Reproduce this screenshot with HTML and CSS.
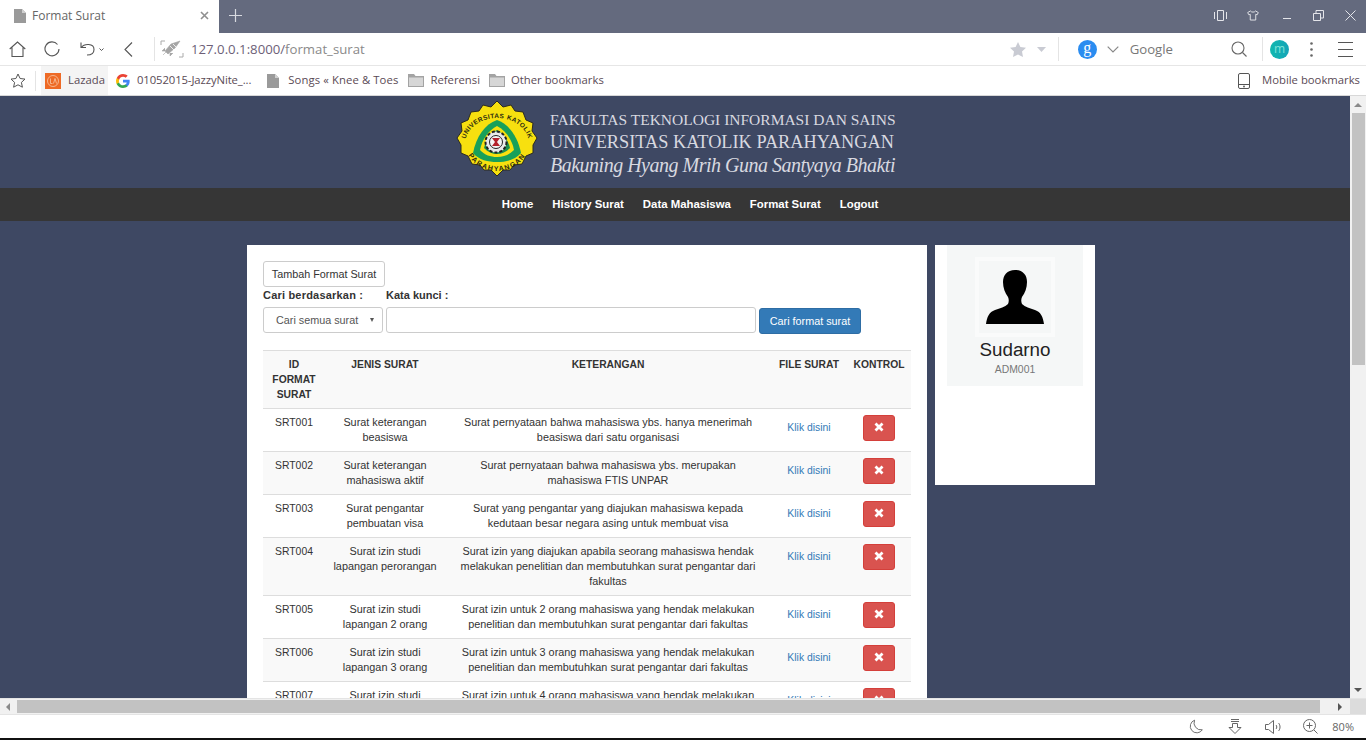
FILE: index.html
```html
<!DOCTYPE html>
<html>
<head>
<meta charset="utf-8">
<title>Format Surat</title>
<link rel="stylesheet" href="styles.css">
</head>
<body>

<!-- tab strip -->
<div class="titlebar">
  <div class="tab">
    <svg class="tab-doc" width="12" height="14" viewBox="0 0 12 14"><path d="M0 0h8l4 4v10H0z" fill="#9a9a9a"/><path d="M8 0l4 4H8z" fill="#d0d0d0"/></svg>
    <span class="tab-title">Format Surat</span>
    <svg class="tab-close" width="9" height="9" viewBox="0 0 9 9"><path d="M1 1l7 7M8 1L1 8" stroke="#8f8f8f" stroke-width="1.6"/></svg>
  </div>
  <svg class="tab-new" width="15" height="15" viewBox="0 0 15 15"><path d="M7.5 1v13M1 7.5h13" stroke="#d8dae0" stroke-width="1.2"/></svg>
  <div class="win-btns">
    <svg width="13" height="11" viewBox="0 0 13 11"><path d="M3.5 .5h6v10h-6zM.5 2v7M12.5 2v7" fill="none" stroke="#e4e5ea"/></svg>
    <svg class="ic-shirt" width="12" height="11" viewBox="0 0 14 12"><path d="M4 .7L.8 2.6l1.4 2.6 1.6-.6v6.7h6.4V4.6l1.6.6 1.4-2.6L10 .7C9 2.5 5 2.5 4 .7z" fill="none" stroke="#e4e5ea" stroke-width="1.1"/></svg>
    <svg width="10" height="11" viewBox="0 0 10 11"><path d="M1 8.500h8" stroke="#e4e5ea"/></svg>
    <svg width="11" height="11" viewBox="0 0 11 11"><path d="M.5 3.500h7v7h-7zM3 3.500V.5h7.500V8H7.500" fill="none" stroke="#e4e5ea"/></svg>
    <svg width="11" height="11" viewBox="0 0 11 11"><path d="M.5.5l10 10M10.500.5l-10 10" stroke="#e4e5ea"/></svg>
  </div>
</div>

<!-- address bar -->
<div class="toolbar">
  <svg class="ic-home" width="17" height="16" viewBox="0 0 17 16"><path d="M.7 8L8.500 1l7.800 7M3 6.500v9h11v-9" fill="none" stroke="#555" stroke-width="1.1"/></svg>
  <svg class="ic-reload" width="16" height="16" viewBox="0 0 16 16"><path d="M13.500 3.500A7 7 0 1 0 15 8" fill="none" stroke="#555" stroke-width="1.1"/></svg>
  <svg class="ic-undo" width="25" height="14" viewBox="0 0 25 14"><path d="M1 .5v5h5M1.500 5.500C4 1.500 14 1 14 7.500c0 3.500-3 5.500-7 5.500" fill="none" stroke="#555" stroke-width="1.1"/><path d="M19.500 6.500l2 2 2-2" fill="none" stroke="#555"/></svg>
  <svg class="ic-back" width="9" height="15" viewBox="0 0 9 15"><path d="M8 .5l-7 7 7 7" fill="none" stroke="#555" stroke-width="1.1"/></svg>
  <span class="tb-sep sep-a"></span>
  <svg class="ic-rocket" width="24" height="18" viewBox="0 0 24 18"><path d="M1 5V1h4M23 13v4h-4" fill="none" stroke="#aaa"/><path d="M20 1l-9 3-6 7 3 3 7-6zM5 8l-3 3 3 0M10 13l0 3 3-3M3 15l3-3" fill="#a5a5a5" stroke="#a5a5a5" stroke-width=".6"/><path d="M10 6l4 4M13 4l3 3" stroke="#fff" stroke-width=".8"/></svg>
  <span class="url"><b>127.0.0.1:8000/</b>format_surat</span>
  <svg class="ic-star" width="16" height="15" viewBox="0 0 16 15"><path d="M8 0l2.400 5 5.600.7-4 3.900 1 5.400L8 12.400 3 15l1-5.400-4-3.900L5.600 5z" fill="#c9cbd3"/></svg>
  <svg class="ic-caret" width="9" height="5" viewBox="0 0 9 5"><path d="M0 0h9L4.500 5z" fill="#c9cbd3"/></svg>
  <span class="tb-sep sep-b"></span>
  <span class="g-circle">g</span>
  <svg class="ic-chev" width="12" height="7" viewBox="0 0 12 7"><path d="M.7.7L6 6 11.300.7" fill="none" stroke="#888" stroke-width="1.200"/></svg>
  <span class="search-name">Google</span>
  <svg class="ic-search" width="16" height="16" viewBox="0 0 16 16"><circle cx="7" cy="7" r="6" fill="none" stroke="#666" stroke-width="1.100"/><path d="M11.500 11.500l4 4" stroke="#666" stroke-width="1.100"/></svg>
  <span class="tb-sep sep-c"></span>
  <span class="m-circle">m</span>
  <svg class="ic-dots" width="3" height="15" viewBox="0 0 3 15"><circle cx="1.500" cy="1.500" r="1.300" fill="#666"/><circle cx="1.500" cy="7.500" r="1.300" fill="#666"/><circle cx="1.500" cy="13.500" r="1.300" fill="#666"/></svg>
  <svg class="ic-menu" width="15" height="15" viewBox="0 0 15 15"><path d="M0 .5h15M0 7.500h15M0 14.500h15" stroke="#555"/></svg>
</div>

<!-- bookmarks -->
<div class="bookmarks">
  <svg class="ic-bmstar" width="16" height="15" viewBox="0 0 16 15"><path d="M8 1l2.100 4.500 4.900.6-3.600 3.300 1 4.800L8 11.800l-4.400 2.400 1-4.800L1 6.100l4.900-.6z" fill="none" stroke="#555"/></svg>
  <span class="bm-sep"></span>
  <span class="bm bm-lazada">
    <svg width="16" height="16" viewBox="0 0 16 16"><rect width="16" height="16" fill="#ee6a25"/><circle cx="8" cy="8" r="5.500" fill="none" stroke="#f8c9a8" stroke-width=".8"/><path d="M5.500 5.500v5h2M8.500 10.500l1.500-5 1.500 5" fill="none" stroke="#f8c9a8" stroke-width=".8"/></svg>
    Lazada
  </span>
  <span class="bm bm-g">
    <svg width="14" height="14" viewBox="0 0 18 18"><path d="M17.600 9.200c0-.6-.1-1.200-.2-1.800H9v3.500h4.800c-.2 1.100-.8 2.100-1.800 2.700v2.200h2.900c1.700-1.600 2.700-3.900 2.700-6.600z" fill="#4285f4"/><path d="M9 18c2.400 0 4.500-.8 6-2.200l-3-2.200c-.8.500-1.800.9-3 .9-2.300 0-4.300-1.600-5-3.700H1v2.300C2.500 16 5.500 18 9 18z" fill="#34a853"/><path d="M4 10.700c-.4-1.100-.4-2.300 0-3.400V5H1a9 9 0 0 0 0 8z" fill="#fbbc05"/><path d="M9 3.600c1.300 0 2.500.5 3.400 1.300L15 2.400C13.500.9 11.400 0 9 0 5.500 0 2.500 2 1 5l3 2.300C4.700 5.200 6.700 3.600 9 3.600z" fill="#ea4335"/></svg>
    01052015-JazzyNite_...
  </span>
  <span class="bm bm-songs">
    <svg width="12" height="14" viewBox="0 0 12 14"><path d="M0 0h8l4 4v10H0z" fill="#9a9a9a"/><path d="M8 0l4 4H8z" fill="#d0d0d0"/></svg>
    Songs « Knee &amp; Toes
  </span>
  <span class="bm bm-ref">
    <svg width="16" height="13" viewBox="0 0 16 13"><path d="M0 0h6l1.500 2H16v11H0z" fill="#a3a3a3"/><path d="M1 3.500h14V12H1z" fill="#d6d6d6"/></svg>
    Referensi
  </span>
  <span class="bm bm-other">
    <svg width="16" height="13" viewBox="0 0 16 13"><path d="M0 0h6l1.500 2H16v11H0z" fill="#a3a3a3"/><path d="M1 3.500h14V12H1z" fill="#d6d6d6"/></svg>
    Other bookmarks
  </span>
  <span class="bm bm-mobile">
    <svg width="12" height="16" viewBox="0 0 12 16"><rect x=".5" y=".5" width="11" height="15" rx="1.500" fill="none" stroke="#555"/><path d="M.5 11.500h11" stroke="#555"/><circle cx="6" cy="13.500" r=".9" fill="#555"/></svg>
    Mobile bookmarks
  </span>
</div>

<!-- browser viewport -->
<div class="viewport">
  <div class="page">
    <div class="site-header">
      <svg class="logo" width="90" height="84" viewBox="0 0 90 84">
        <defs>
          <path id="arcTop" d="M13 46 A32 26 0 0 1 77 46"/>
          <path id="arcBot" d="M12 42 A33 31 0 0 0 78 42"/>
        </defs>
        <path d="M45 3L51 9 59 7 63 13 71 14 74 22 81 25 80 33 85 40 81 47 81 55 74 58 70 66 62 67 58 72 51 72 45 78 39 72 32 72 28 67 20 66 16 58 9 55 9 47 5 40 10 33 9 25 16 22 19 14 27 13 31 7 39 9z" fill="#f7e00f" stroke="#2b2a20" stroke-width="1"/>
        <path d="M45 22c12 4 21 17 24 33-6 7-15 9-24 9s-18-2-24-9c3-16 12-29 24-33z" fill="#18a05a"/>
        <path d="M45 28c8 4 15 13 17 24-5 5-10 7-17 7s-12-2-17-7c2-11 9-20 17-24z" fill="#f7e00f"/>
        <path d="M45 32c6 3 11 10 13 18-4 4-8 6-13 6s-9-2-13-6c2-8 7-15 13-18z" fill="#1c8f50"/>
        <circle cx="44" cy="44" r="10.500" fill="#e9e9e9" stroke="#222" stroke-width="2" stroke-dasharray="3 2"/>
        <circle cx="44" cy="44" r="6.500" fill="#f4f4f4" stroke="#222"/>
        <path d="M40 40h8l-3 4 3 4h-8l3-4z" fill="#b3202a"/>
        <text class="logo-arc"><textPath href="#arcTop" startOffset="50%" text-anchor="middle">UNIVERSITAS KATOLIK</textPath></text>
        <text class="logo-arc logo-arc-b"><textPath href="#arcBot" startOffset="50%" text-anchor="middle">PARAHYANGAN</textPath></text>
      </svg>
      <div class="brand">
        <div class="brand-a">FAKULTAS TEKNOLOGI INFORMASI DAN SAINS</div>
        <div class="brand-b">UNIVERSITAS KATOLIK PARAHYANGAN</div>
        <div class="brand-c">Bakuning Hyang Mrih Guna Santyaya Bhakti</div>
      </div>
    </div>

    <div class="site-nav">
      <a>Home</a>
      <a>History Surat</a>
      <a>Data Mahasiswa</a>
      <a>Format Surat</a>
      <a>Logout</a>
    </div>

    <div class="content">
      <div class="card-main">
        <button class="btn btn-add">Tambah Format Surat</button>
        <div class="labels">
          <label class="lab-a">Cari berdasarkan :</label>
          <label>Kata kunci :</label>
        </div>
        <div class="search-row">
          <div class="fake-select">Cari semua surat<span class="sel-arrow"></span></div>
          <div class="fake-input"></div>
          <button class="btn btn-blue">Cari format surat</button>
        </div>

        <table class="tbl">
          <thead>
            <tr>
              <th class="col-id">ID FORMAT SURAT</th>
              <th class="col-jenis">JENIS SURAT</th>
              <th class="col-ket">KETERANGAN</th>
              <th class="col-file">FILE SURAT</th>
              <th class="col-ctl">KONTROL</th>
            </tr>
          </thead>
          <tbody id="rows">
            <tr>
              <td class="cell-id">SRT001</td><td>Surat keterangan beasiswa</td>
              <td>Surat pernyataan bahwa mahasiswa ybs. hanya menerimah beasiswa dari satu organisasi</td>
              <td><a class="file-link">Klik disini</a></td>
              <td><button class="btn-del"><svg width="10" height="10" viewBox="0 0 10 10"><path d="M1.500 1.500l7 7M8.500 1.500l-7 7" stroke="#fff" stroke-width="2.800"/></svg></button></td>
            </tr>
            <tr>
              <td class="cell-id">SRT002</td><td>Surat keterangan mahasiswa aktif</td>
              <td>Surat pernyataan bahwa mahasiswa ybs. merupakan mahasiswa FTIS UNPAR</td>
              <td><a class="file-link">Klik disini</a></td>
              <td><button class="btn-del"><svg width="10" height="10" viewBox="0 0 10 10"><path d="M1.500 1.500l7 7M8.500 1.500l-7 7" stroke="#fff" stroke-width="2.800"/></svg></button></td>
            </tr>
            <tr>
              <td class="cell-id">SRT003</td><td>Surat pengantar pembuatan visa</td>
              <td>Surat yang pengantar yang diajukan mahasiswa kepada kedutaan besar negara asing untuk membuat visa</td>
              <td><a class="file-link">Klik disini</a></td>
              <td><button class="btn-del"><svg width="10" height="10" viewBox="0 0 10 10"><path d="M1.500 1.500l7 7M8.500 1.500l-7 7" stroke="#fff" stroke-width="2.800"/></svg></button></td>
            </tr>
            <tr>
              <td class="cell-id">SRT004</td><td>Surat izin studi lapangan perorangan</td>
              <td>Surat izin yang diajukan apabila seorang mahasiswa hendak melakukan penelitian dan membutuhkan surat pengantar dari fakultas</td>
              <td><a class="file-link">Klik disini</a></td>
              <td><button class="btn-del"><svg width="10" height="10" viewBox="0 0 10 10"><path d="M1.500 1.500l7 7M8.500 1.500l-7 7" stroke="#fff" stroke-width="2.800"/></svg></button></td>
            </tr>
            <tr>
              <td class="cell-id">SRT005</td><td>Surat izin studi lapangan 2 orang</td>
              <td>Surat izin untuk 2 orang mahasiswa yang hendak melakukan penelitian dan membutuhkan surat pengantar dari fakultas</td>
              <td><a class="file-link">Klik disini</a></td>
              <td><button class="btn-del"><svg width="10" height="10" viewBox="0 0 10 10"><path d="M1.500 1.500l7 7M8.500 1.500l-7 7" stroke="#fff" stroke-width="2.800"/></svg></button></td>
            </tr>
            <tr>
              <td class="cell-id">SRT006</td><td>Surat izin studi lapangan 3 orang</td>
              <td>Surat izin untuk 3 orang mahasiswa yang hendak melakukan penelitian dan membutuhkan surat pengantar dari fakultas</td>
              <td><a class="file-link">Klik disini</a></td>
              <td><button class="btn-del"><svg width="10" height="10" viewBox="0 0 10 10"><path d="M1.500 1.500l7 7M8.500 1.500l-7 7" stroke="#fff" stroke-width="2.800"/></svg></button></td>
            </tr>
            <tr>
              <td class="cell-id">SRT007</td><td>Surat izin studi lapangan 4 orang</td>
              <td>Surat izin untuk 4 orang mahasiswa yang hendak melakukan penelitian dan membutuhkan surat pengantar dari fakultas</td>
              <td><a class="file-link">Klik disini</a></td>
              <td><button class="btn-del"><svg width="10" height="10" viewBox="0 0 10 10"><path d="M1.500 1.500l7 7M8.500 1.500l-7 7" stroke="#fff" stroke-width="2.800"/></svg></button></td>
            </tr>
          </tbody>
        </table>
      </div>

      <div class="card-side">
        <div class="profile">
          <div class="avatar">
            <svg width="58" height="54" viewBox="0 0 58 54"><path d="M29 0c-8 0-12 5-12 12 0 6 2 11 5 15 1 2 1 5 0 7-3 3-8 4-13 6C3 42 1 47 0 54h58c-1-7-3-12-9-14-5-2-10-3-13-6-1-2-1-5 0-7 3-4 5-9 5-15 0-7-4-12-12-12z" fill="#000"/></svg>
          </div>
          <div class="pname">Sudarno</div>
          <div class="pid">ADM001</div>
        </div>
      </div>
    </div>
  </div>
  <div class="vscroll">
    <svg width="8" height="4" viewBox="0 0 8 4"><path d="M4 0l4 4H0z" fill="#8a8a8a"/></svg>
    <div class="vthumb"></div>
    <svg class="v-down" width="8" height="4" viewBox="0 0 8 4"><path d="M0 0h8L4 4z" fill="#555"/></svg>
  </div>
</div>

<div class="hscroll">
  <svg width="4" height="8" viewBox="0 0 4 8"><path d="M4 0v8L0 4z" fill="#8a8a8a"/></svg>
  <div class="hthumb"></div>
  <svg width="4" height="8" viewBox="0 0 4 8"><path d="M0 0v8l4-4z" fill="#555"/></svg>
  <span class="corner"></span>
</div>

<!-- status bar -->
<div class="statusbar">
  <svg width="14" height="15" viewBox="0 0 15 15"><path d="M6 .7A7 7 0 1 0 14.300 11 7.500 7.500 0 0 1 6 .7z" fill="none" stroke="#666"/></svg>
  <svg class="st-down" width="14" height="15" viewBox="0 0 14 15"><path d="M3 .5h8M3 2.500h8M4.500 4.500h5v4H13l-6 6-6-6h3.500z" fill="none" stroke="#666"/></svg>
  <svg class="st-sound" width="18" height="14" viewBox="0 0 18 14"><path d="M.5 4.500h3l5-4v13l-5-4h-3zM11 5c1 1 1 3 0 4M13.500 3c2 2 2 6 0 8" fill="none" stroke="#666"/></svg>
  <svg class="st-zoom" width="15" height="15" viewBox="0 0 15 15"><circle cx="6.500" cy="6.500" r="6" fill="none" stroke="#666"/><path d="M3.500 6.500h6M6.500 3.500v6M11 11l3.500 3.500" stroke="#666"/></svg>
  <span class="zoom-val">80%</span>
</div>
<div class="taskbar"></div>

</body>
</html>
```

FILE: styles.css
```css
* {
  box-sizing: border-box;
}

html, body {
  margin: 0;
  height: 740px;
  overflow: hidden;
}

body {
  display: flex;
  flex-direction: column;
  font-family: "Liberation Sans", Arial, sans-serif;
  color: #333;
  background: #fff;
}

/* Tab strip */
.titlebar {
  height: 33px;
  flex: none;
  display: flex;
  align-items: center;
  background: #646a7e;
}

.tab {
  width: 219px;
  height: 33px;
  display: flex;
  align-items: center;
  padding: 0 0 2px 14px;
  background: #fff;
}

.tab-title {
  margin-left: 6px;
  font: 12px "Open Sans", sans-serif;
  color: #666;
}

.tab-close {
  margin-left: auto;
  margin-right: 10px;
}

.tab-new {
  margin: 0 0 2px 9px;
}

.win-btns {
  margin: 0 0 2px auto;
  display: flex;
  align-items: center;
  gap: 21px;
  padding-right: 10px;
}

.ic-shirt {
  margin: 0 2px 0 -1px;
}

/* Address bar */
.toolbar {
  height: 33px;
  flex: none;
  display: flex;
  align-items: center;
  background: #fff;
  border-bottom: 1px solid #e6e6e6;
}

.ic-home { margin-left: 9px; }
.ic-reload { margin-left: 18px; }
.ic-undo { margin-left: 20px; }
.ic-back { margin-left: 19px; }

.tb-sep {
  width: 1px;
  height: 24px;
  background: #e4e4e4;
}

.sep-a { margin-left: 21px; }
.ic-rocket { margin-left: 5px; }

.url {
  margin-left: 7px;
  font: 13.200px "Open Sans", sans-serif;
  color: #8a8a8a;
}

.url b {
  font-weight: 400;
  color: #6d5f78;
}

.ic-star { margin-left: auto; }
.ic-caret { margin-left: 11px; }
.sep-b { margin-left: 12px; }

.g-circle {
  width: 19px;
  height: 19px;
  margin-left: 19px;
  border-radius: 50%;
  background: #2a8cf0;
  color: #fff;
  font: 16px/15px "Liberation Serif", serif;
  text-align: center;
}

.ic-chev { margin-left: 10px; }

.search-name {
  margin-left: 11px;
  font: 13.200px "Open Sans", sans-serif;
  color: #777;
}

.ic-search { margin-left: 58px; }
.sep-c { margin-left: 15px; }

.m-circle {
  width: 19px;
  height: 19px;
  margin-left: 7px;
  border-radius: 50%;
  background: linear-gradient(90deg, #10b8ae, #14a4b8);
  color: #7fe3d8;
  font: 12px/17px "Open Sans", sans-serif;
  text-align: center;
}

.ic-dots { margin-left: 21px; }
.ic-menu { margin-left: 25px; margin-right: 13px; }

/* Bookmarks */
.bookmarks {
  height: 30px;
  flex: none;
  display: flex;
  align-items: center;
  background: #fff;
  border-bottom: 1px solid #d8d8d8;
  font: 11.300px "Open Sans", sans-serif;
  color: #5a4a55;
}

.ic-bmstar { margin-left: 10px; }

.bm-sep {
  width: 1px;
  height: 20px;
  margin-left: 9px;
  background: #e4e4e4;
}

.bm {
  display: flex;
  align-items: center;
  gap: 7px;
  padding-bottom: 2px;
  white-space: nowrap;
}

.bm svg {
  margin-top: 2px;
}

.bm-lazada {
  width: 67px;
  height: 29px;
  margin-left: 5px;
  padding-left: 4px;
  background: #f4f4f4;
  overflow: hidden;
}

.bm-g { margin-left: 8px; letter-spacing: -.1px; }
.bm-songs { margin-left: 16px; gap: 9px; letter-spacing: .1px; }
.bm-ref { margin-left: 10px; gap: 6px; }
.bm-other { margin-left: 9px; gap: 6px; }
.bm-mobile { margin-left: auto; margin-right: 6px; gap: 12px; }

/* Browser viewport */
.viewport {
  height: 602px;
  flex: none;
  display: flex;
}

.page {
  width: 1350px;
  overflow: hidden;
  background: #3e4863;
}

.vscroll {
  width: 16px;
  display: flex;
  flex-direction: column;
  align-items: center;
  padding-top: 7px;
  background: #f1f1f1;
}

.vthumb {
  width: 13px;
  height: 252px;
  margin-top: 6px;
  background: #c2c2c2;
}

.v-down {
  margin-top: auto;
  margin-bottom: 6px;
}

.hscroll {
  height: 17px;
  flex: none;
  display: flex;
  align-items: center;
  padding-left: 6px;
  background: #f1f1f1;
  border-top: 1px solid #e4e4e4;
  border-bottom: 1px solid #e4e4e4;
}

.hthumb {
  width: 1303px;
  height: 13px;
  margin-left: 7px;
  margin-right: 18px;
  background: #c2c2c2;
}

.corner {
  width: 16px;
  height: 15px;
  margin-left: auto;
  background: #dcdcdc;
}

.statusbar {
  height: 23px;
  flex: none;
  display: flex;
  align-items: center;
  justify-content: flex-end;
  padding-right: 12px;
  background: #fff;
  font: 11px "Open Sans", sans-serif;
  color: #666;
}

.st-down { margin-left: 25px; }
.st-sound { margin-left: 23px; }
.st-zoom { margin-left: 20px; }
.zoom-val { margin-left: 14px; }

.taskbar {
  height: 2px;
  flex: none;
  background: #111;
}

/* Site header */
.site-header {
  height: 92px;
  display: flex;
  align-items: center;
  padding-left: 452px;
}

.logo {
  flex: none;
  align-self: flex-start;
  margin-top: 2px;
}

.logo-arc {
  font: bold 6.500px "Liberation Sans", sans-serif;
  letter-spacing: .4px;
  fill: #2a2a10;
}

.logo-arc-b {
  font-size: 7px;
  letter-spacing: 1.300px;
}

.brand {
  margin: 1px 0 0 8px;
  font-family: "Liberation Serif", serif;
  color: #d8d9e0;
  white-space: nowrap;
}

.brand-a {
  font-size: 15.500px;
  line-height: 20px;
}

.brand-b {
  font-size: 18.300px;
  line-height: 24px;
}

.brand-c {
  font-size: 20px;
  line-height: 22px;
  font-style: italic;
  letter-spacing: -.5px;
}

/* Site nav */
.site-nav {
  height: 33px;
  display: flex;
  align-items: center;
  justify-content: center;
  gap: 19px;
  padding: 0 0 2px 30px;
  background: #363636;
  font-size: 11.400px;
  font-weight: 700;
  color: #fff;
}

/* Cards */
.content {
  display: flex;
  align-items: flex-start;
  gap: 8px;
  padding: 24px 0 0 247px;
}

.card-main {
  width: 680px;
  padding: 16px;
  background: #fff;
  font-size: 10.800px;
}

.card-side {
  width: 160px;
  height: 240px;
  padding: 0 12px;
  background: #fff;
}

.btn {
  display: block;
  font-family: inherit;
  font-size: 10.800px;
  border-radius: 3px;
  cursor: pointer;
}

.btn-add {
  width: 122px;
  height: 26px;
  padding: 0;
  background: #fff;
  border: 1px solid #ccc;
  color: #333;
}

.labels {
  display: flex;
  height: 16px;
  align-items: center;
  font-size: 11px;
  font-weight: 700;
}

.lab-a {
  width: 123px;
  letter-spacing: .2px;
}

.search-row {
  display: flex;
  align-items: flex-start;
  margin-top: 4px;
}

.fake-select {
  width: 120px;
  height: 26px;
  display: flex;
  align-items: center;
  justify-content: space-between;
  padding: 0 8px 0 12px;
  border: 1px solid #ccc;
  border-radius: 3px;
  color: #555;
}

.sel-arrow {
  border-left: 2.500px solid transparent;
  border-right: 2.500px solid transparent;
  border-top: 4px solid #555;
}

.fake-input {
  width: 370px;
  height: 26px;
  margin-left: 3px;
  border: 1px solid #ccc;
  border-radius: 3px;
}

.btn-blue {
  width: 102px;
  height: 26px;
  margin: 1px 0 0 3px;
  padding: 0;
  background: #337ab7;
  border: 1px solid #2e6da4;
  color: #fff;
}

/* Table */
.tbl {
  width: 648px;
  margin-top: 16px;
  border-collapse: collapse;
  table-layout: fixed;
  text-align: center;
  line-height: 15px;
  font-size: 10.850px;
}

.tbl th {
  padding: 6px;
  vertical-align: top;
  background: #f9f9f9;
  border-top: 1px solid #ddd;
  border-bottom: 1px solid #ddd;
  font-size: 10.300px;
  font-weight: 700;
}

.tbl td {
  padding: 6px;
  vertical-align: top;
  border-bottom: 1px solid #ddd;
}

.tbl td:nth-child(3) {
  padding: 6px 8px;
}

.tbl tbody tr:nth-child(even) {
  background: #f9f9f9;
}

.col-id { width: 62px; }
.col-jenis { width: 120px; }
.col-ket { width: 326px; }
.col-file { width: 76px; }
.col-ctl { width: 64px; }

.tbl .cell-id {
  font-size: 10.400px;
}

.file-link {
  display: block;
  margin-top: 5px;
  font-size: 10.400px;
  color: #337ab7;
}

.btn-del {
  display: flex;
  align-items: center;
  justify-content: center;
  width: 32px;
  height: 26px;
  margin: 0 auto;
  padding: 0 0 3px;
  background: #d9534f;
  border: 1px solid #d43f3a;
  border-radius: 3px;
}

/* Profile */
.profile {
  height: 141px;
  padding-top: 12px;
  background: #f5f7f7;
  text-align: center;
}

.avatar {
  width: 80px;
  height: 80px;
  margin: 0 auto;
  padding-top: 9px;
  border: 4px solid #fafbfb;
}

.pname {
  margin-top: 2px;
  font-size: 18.800px;
  line-height: 22px;
  color: #222;
}

.pid {
  margin-top: 3px;
  font-size: 10.400px;
  color: #777;
}
```
